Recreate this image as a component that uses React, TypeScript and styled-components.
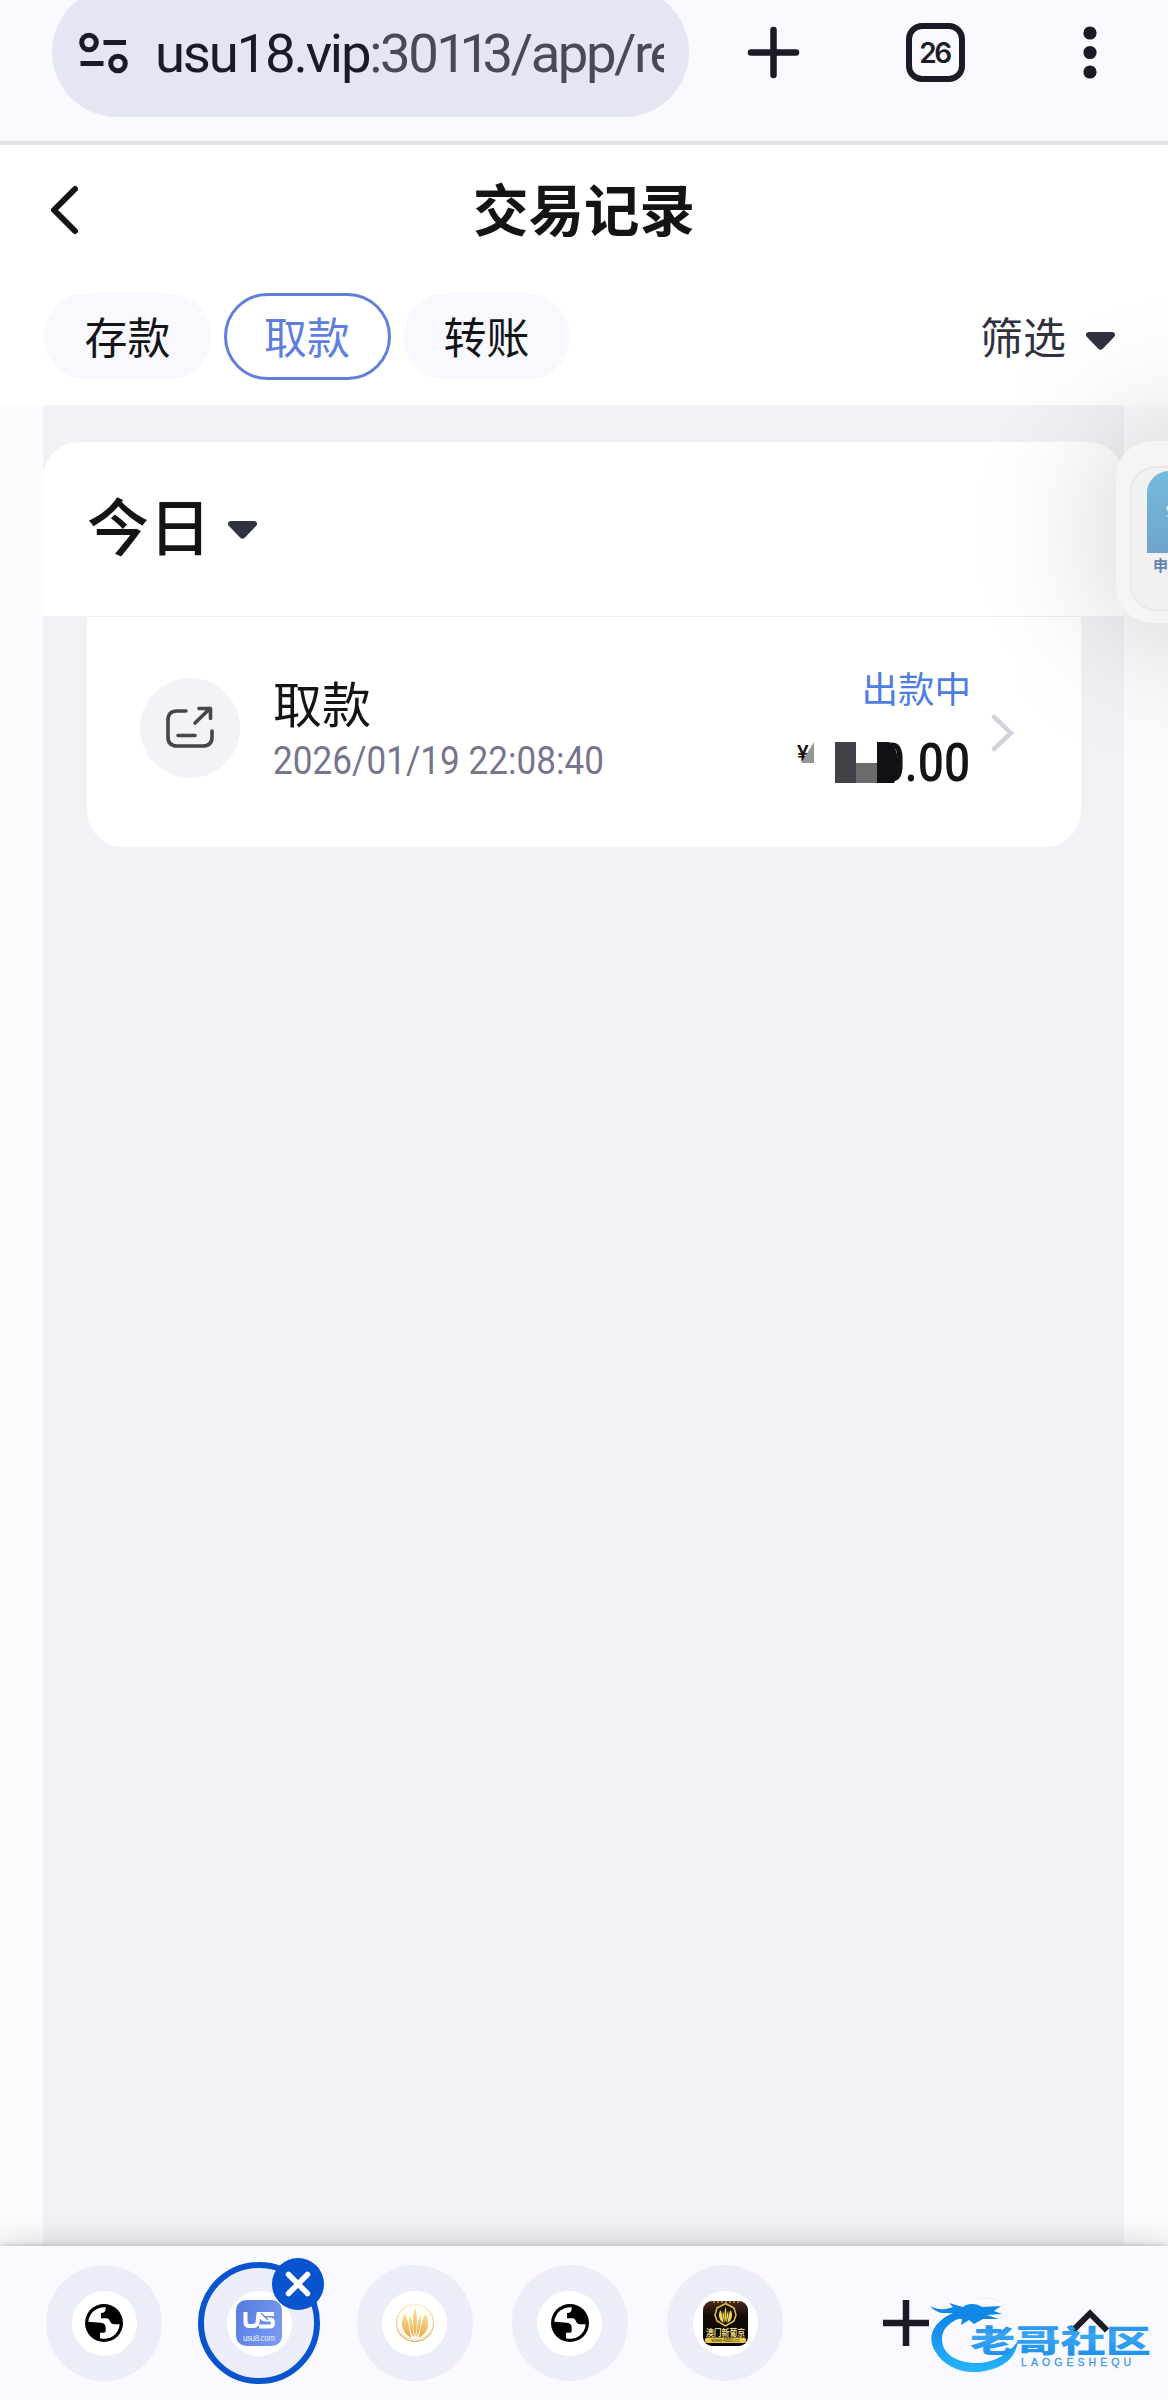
import React from "react";
import styled, { createGlobalStyle } from "styled-components";

const cjk = `"Noto Sans CJK SC", sans-serif`;

const Global = createGlobalStyle`
  * { box-sizing: border-box; }
  body { margin: 0; background: #fbfbfd; font-family: Roboto, ${cjk}; color: #141416; }
`;

const Screen = styled.div`
  position: relative;
  width: 1168px;
  height: 2400px;
  display: flex;
  flex-direction: column;
  overflow: hidden;
`;

/* Browser toolbar */
const Toolbar = styled.header`
  height: 145px;
  flex: none;
  display: flex;
  align-items: flex-start;
  padding-left: 52px;
  background: #f9f9ff;
  border-bottom: 4px solid #e2e2e8;
`;
const AddressPill = styled.div`
  width: 637px;
  height: 130px;
  margin-top: -13px;
  padding: 2px 25px 0 27px;
  border-radius: 65px;
  background: #e4e6f4;
  display: flex;
  align-items: center;
  gap: 27px;
`;
const Url = styled.div`
  width: 509px;
  overflow: hidden;
  white-space: nowrap;
  font: 400 54.5px/80px Roboto, sans-serif;
  color: #474a59;
`;
const Host = styled.span`
  color: #191b28;
  letter-spacing: -2.2px;
`;
const UrlPath = styled.span`
  letter-spacing: -2.5px;
`;
const NarrowDigits = styled.span`
  letter-spacing: -7.5px;
`;
const ToolbarIcons = styled.div`
  display: flex;
  align-items: center;
  height: 105px;
  padding-left: 58px;
  gap: 106px;
`;
const TabCount = styled.div`
  width: 59px;
  height: 59px;
  border: 6.5px solid #1a1b26;
  border-radius: 16px;
  display: flex;
  align-items: center;
  justify-content: center;
  font: 600 28px/28px Inter, sans-serif;
  letter-spacing: -2.4px;
  padding-right: 2px;
  color: #1a1b26;
`;

/* Page heading */
const Heading = styled.div`
  flex: none;
  height: 260px;
  background: #fff;
`;
const TitleRow = styled.div`
  height: 132px;
  display: grid;
  grid-template-columns: 200px 1fr 200px;
  align-items: center;
`;
const Back = styled.svg`
  margin: -2px 0 0 47px;
`;
const Title = styled.h1`
  margin: 0;
  padding-bottom: 9px;
  text-align: center;
  font: 700 55.5px/80px ${cjk};
`;
const FilterRow = styled.div`
  display: flex;
  align-items: center;
  padding: 16px 53px 0 44px;
`;
const Chips = styled.div`
  display: flex;
  gap: 12.5px;
  flex: 1;
`;
const Chip = styled.button<{ $active?: boolean }>`
  width: 167px;
  height: 87px;
  padding: 0 0 4px;
  border-radius: 44px;
  border: ${(p) => (p.$active ? "3px solid #5f7fda" : "3px solid #f8f9fe")};
  background: ${(p) => (p.$active ? "#fff" : "#f8f9fe")};
  color: ${(p) => (p.$active ? "#5f7fe0" : "#141416")};
  font: 400 43px/60px ${cjk};
`;
const Filter = styled.div`
  display: flex;
  align-items: center;
  gap: 20px;
  padding-bottom: 4px;
  color: #30323f;
  font: 400 43px/60px ${cjk};
`;
const Caret = styled.svg`
  margin-top: 13px;
`;

/* Records */
const Records = styled.main`
  flex: 1;
  margin: 0 44px 0 43px;
  padding-top: 37px;
  background: #f1f1f6;
`;
const DayHeader = styled.section`
  height: 174px;
  padding: 0 0 11px 44px;
  border-radius: 36px 36px 0 0;
  background: #fff;
  display: flex;
  align-items: center;
  gap: 17px;
  font: 500 62px/80px ${cjk};
`;
const RecordCard = styled.section`
  height: 231px;
  margin: 0 43px 0 44px;
  padding: 0 66px 8px 53px;
  border-top: 1px solid #ededf0;
  border-radius: 0 0 36px 36px;
  background: #fff;
  display: flex;
  align-items: center;
`;
const RecordIcon = styled.div`
  width: 100px;
  height: 100px;
  border-radius: 50%;
  background: #f2f2f7;
  display: flex;
  align-items: center;
  justify-content: center;
`;
const RecordInfo = styled.div`
  flex: 1;
  padding: 0 0 2px 33px;
`;
const RecordName = styled.div`
  font: 400 49px/64px ${cjk};
  padding-bottom: 3px;
`;
const RecordTime = styled.div`
  font: 400 38px/48px Roboto, sans-serif;
  color: #77758c;
  white-space: nowrap;
  transform: scaleX(0.924);
  transform-origin: left;
`;
const RecordSum = styled.div`
  width: 175px;
  display: flex;
  flex-direction: column;
  align-items: flex-end;
  gap: 18px;
`;
const Status = styled.div`
  margin: -2px -1px 0 0;
  font: 400 36.5px/54px ${cjk};
  color: #4c7ee4;
`;
const Amount = styled.div`
  position: relative;
  width: 175px;
  height: 60px;
  display: flex;
  justify-content: space-between;
  align-items: center;
`;
const Yen = styled.span`
  font: 500 22px/22px Roboto, sans-serif;
  margin: -18px 0 0 2px;
`;
const Digits = styled.span`
  font: 500 53px/60px Roboto, sans-serif;
  transform: scaleX(0.87);
  transform-origin: right;
`;
const Mosaic = styled.svg`
  position: absolute;
  left: 3px;
  top: 9px;
`;
const Chevron = styled.svg`
  margin: 10px 0 0 21px;
`;

/* Floating service widget */
const Widget = styled.aside`
  position: absolute;
  left: 1116px;
  top: 441px;
  width: 182px;
  height: 182px;
  padding: 25px 0 0 14px;
  border-radius: 36px;
  background: #f5f5f5;
  box-shadow: 0 0 150px rgba(0, 0, 0, 0.22);
`;
const WidgetInner = styled.div`
  width: 145px;
  height: 145px;
  padding: 3px 0 0 15px;
  border-radius: 26px;
  border: 2px solid #e8e8e9;
  background: #f1f1f2;
`;
const WidgetPicture = styled.div`
  width: 110px;
  height: 82px;
  border-radius: 22px 0 0 0;
  background: linear-gradient(#75bbdc, #70a3cb);
  display: flex;
`;
const WidgetLabel = styled.div`
  padding-left: 6px;
  font: 700 15px/24px ${cjk};
  color: #6282b2;
`;

/* Tab strip */
const TabStrip = styled.footer`
  position: relative;
  height: 154px;
  flex: none;
  display: flex;
  padding: 16px 0 0 43px;
  background: #f9f9ff;
  box-shadow: 0 -1px 5px rgba(0, 0, 0, 0.18), 0 -5px 28px rgba(0, 0, 0, 0.13);
`;
const TabList = styled.div`
  display: flex;
  gap: 33.3px;
`;
const Tab = styled.div<{ $active?: boolean }>`
  position: relative;
  width: 122px;
  height: 122px;
  border-radius: 50%;
  border: ${(p) => (p.$active ? "6.5px solid #0854cf" : "3px solid transparent")};
  background: #ebedf9;
  background-clip: padding-box;
  display: flex;
  align-items: center;
  justify-content: center;
`;
const Favicon = styled.div`
  width: 65px;
  height: 65px;
  border-radius: 50%;
  background: #fff;
  display: flex;
  align-items: center;
  justify-content: center;
`;
const CloseBadge = styled.div`
  position: absolute;
  right: -10px;
  top: -10px;
  width: 52px;
  height: 52px;
  border-radius: 50%;
  background: #0854cf;
  display: flex;
  align-items: center;
  justify-content: center;
`;
const StripActions = styled.div`
  display: flex;
  width: 226px;
  height: 122px;
  margin-left: 97px;
  justify-content: space-between;
  align-items: center;
`;
const ExpandIcon = styled.svg`
  margin-bottom: 4px;
`;
const Watermark = styled.svg`
  position: absolute;
  left: 926px;
  top: 50px;
`;

const CaretIcon = () => (
  <Caret width={29} height="18" viewBox="0 0 29 18">
    <path d="M3 0H26C29 0 30 3 28 5L17 16.500Q14.500 19 12 16.500L1 5C-1 3 0 0 3 0Z" fill="#30323f" />
  </Caret>
);

const Globe = () => (
  <svg width="38" height="38" viewBox="0 0 114 114">
    <circle cx="57" cy="57" r="57" fill="#000" />
    <path
      d="M10 53A47 47 0 0 1 62 10V14Q62 27 48 27V43H65Q72 43 75 52Q78 61 88 61H104A47 47 0 0 1 45 103V86H56Q62 86 62 80V71Q62 57 48 56Z"
      fill="#fff"
    />
  </svg>
);

const UsLogo = () => (
  <svg width="46" height="46" viewBox="0 0 46 46">
    <defs>
      <linearGradient id="us" x1="0" x2="1" y1="0" y2="0.4">
        <stop offset="0" stopColor="#557be0" />
        <stop offset="1" stopColor="#7797f0" />
      </linearGradient>
    </defs>
    <rect width="46" height="46" rx="10" fill="url(#us)" />
    <path d="M9.500 12V22Q9.500 26 13.500 26H17Q21 26 21.600 22L22.500 14H38" fill="none" stroke="#fff" strokeWidth="4" />
    <path d="M25 14Q25 19.500 30 19.500H34Q37 19.500 37 23T33.500 26.500H23" fill="none" stroke="#fff" strokeWidth="4" />
    <path d="M25 13L32 20" stroke="#6588e9" strokeWidth="1.200" />
    <text x="7" y="41" fontFamily="Inter, sans-serif" fontSize="7.500" fill="#eef3ff" textLength="32">usu8.com</text>
  </svg>
);

const lotusPetals = (
  <>
    <path d="M20 5C17.500 12 17.500 22 20 34C22.500 22 22.500 12 20 5Z" />
    <path d="M14.500 12C13.500 20 15 29 18.600 34.500C18.600 26 17.500 18 14.500 12Z" />
    <path d="M25.500 12C26.500 20 25 29 21.400 34.500C21.400 26 22.500 18 25.500 12Z" />
    <path d="M9.500 11C5 19 6 30 16.500 35C14 28 15 20 9.500 11Z" />
    <path d="M30.500 11C35 19 34 30 23.500 35C26 28 25 20 30.500 11Z" />
  </>
);

const LotusLogo = () => (
  <svg width="40" height="40" viewBox="0 0 40 40">
    <defs>
      <linearGradient id="lotus" x1="0" x2="0" y1="0" y2="1">
        <stop offset="0" stopColor="#f9dc93" />
        <stop offset="1" stopColor="#e9a94b" />
      </linearGradient>
      <linearGradient id="ring" x1="0" x2="0" y1="0" y2="1">
        <stop offset="0" stopColor="#fdf0cd" />
        <stop offset="1" stopColor="#e2b56d" />
      </linearGradient>
    </defs>
    <circle cx="20" cy="20" r="18.500" fill="#fffdf6" stroke="url(#ring)" strokeWidth="1.400" />
    <path d="M5 29Q20 44 35 29Q29 37 20 37T5 29" fill="#e0bd84" opacity=".6" />
    <g fill="url(#lotus)">{lotusPetals}</g>
  </svg>
);

const CasinoLogo = () => (
  <svg width="45" height="45" viewBox="0 0 45 45">
    <defs>
      <linearGradient id="night" x1="0" x2="0" y1="0" y2="1">
        <stop offset="0" stopColor="#49291d" />
        <stop offset=".35" stopColor="#120b06" />
        <stop offset="1" stopColor="#050302" />
      </linearGradient>
      <clipPath id="tile"><rect width="45" height="45" rx="9" /></clipPath>
    </defs>
    <g clipPath="url(#tile)">
      <rect width="45" height="45" fill="url(#night)" />
      <path d="M10 1H36" stroke="#a47733" strokeWidth="2" strokeDasharray="2 2" />
      <path d="M22.500 2.500L31 7L33 14L31 20L22.500 25L14 20L12 14L14 7Z" fill="#171006" stroke="#e0c54a" strokeWidth="1.500" />
      <g transform="translate(12.500 3) scale(.5 .54)" fill="#f0d85b">{lotusPetals}</g>
      <text x="3" y="35" fontFamily='"Noto Sans CJK SC", sans-serif' fontSize="9" fontWeight="700" fill="#f0dc82" textLength="39" lengthAdjust="spacingAndGlyphs">澳门新葡京</text>
      <rect x="2" y="36.500" width="41" height="5.500" rx="2" fill="#e4c74f" />
      <text x="8" y="41" fontFamily="Inter, sans-serif" fontSize="4.800" fill="#503c10" textLength="29">www.4886.cc</text>
    </g>
  </svg>
);

const Brand = () => (
  <Watermark width="232" height="84" viewBox="0 0 232 84">
    <defs>
      <linearGradient id="sea" x1="0" x2="0" y1="0" y2="1">
        <stop offset="0" stopColor="#0c7fe6" />
        <stop offset="1" stopColor="#26b5fa" />
      </linearGradient>
      <linearGradient id="ink" x1="0" x2="0" y1="0" y2="1">
        <stop offset="0" stopColor="#0f7fe0" />
        <stop offset=".45" stopColor="#39a5f4" />
        <stop offset="1" stopColor="#168ceb" />
      </linearGradient>
    </defs>
    <path
      d="M36 14C10 21-1 39 9 55C19 73 43 81 67 73C82 68 90 59 92 45C82 59 67 67 51 67C29 67 16 57 16 43C16 31 27 23 42 20Z"
      fill="url(#sea)"
    />
    <path
      d="M4 10C14 15 21 13 27 11L23 7L37 11C41 7 51 7 56 11L75 10L68 15L76 18L61 19L73 23L57 23L48 28L43 24L35 29L36 23L27 22L32 17L20 17Q11 18 4 10Z"
      fill="#1188e5"
    />
    <path d="M46 4Q67-2 78 9" fill="none" stroke="#e9f1fb" strokeWidth="1" />
    <text x="44" y="55.500" fontFamily='"Noto Sans CJK SC", sans-serif' fontSize="31" fontWeight="900" fill="url(#ink)" textLength="181" lengthAdjust="spacingAndGlyphs">老哥社区</text>
    <text x="95" y="70" fontFamily='"Liberation Sans", sans-serif' fontSize="10.500" fill="#3f9be6" stroke="#3f9be6" strokeWidth=".3" textLength="110">LAOGESHEQU</text>
  </Watermark>
);

export default function App() {
  return (
    <Screen>
      <Global />
      <Toolbar>
        <AddressPill>
          <svg width="49" height="42" viewBox="0 0 49 42" fill="none" stroke="#191b28" strokeWidth="5">
            <circle cx="10" cy="10.500" r="7.300" />
            <path d="M24.500 10.500H47M1.500 31.500H24.500" />
            <circle cx="39" cy="31.500" r="7.300" />
          </svg>
          <Url><Host>usu18.vip</Host><UrlPath>:30<NarrowDigits>11</NarrowDigits>3/app/re</UrlPath></Url>
        </AddressPill>
        <ToolbarIcons>
          <svg width="53" height="53" viewBox="0 0 53 53" stroke="#1a1b26" strokeWidth="6.500" strokeLinecap="round">
            <path d="M4 26.500H49M26.500 4V49" />
          </svg>
          <TabCount>26</TabCount>
          <svg width="40" height="53" viewBox="0 0 40 53" fill="#1a1b26">
            <circle cx="19" cy="7" r="6.600" /><circle cx="19" cy="26.500" r="6.600" /><circle cx="19" cy="46" r="6.600" />
          </svg>
        </ToolbarIcons>
      </Toolbar>

      <Heading>
        <TitleRow>
          <Back width="34" height="52" viewBox="0 0 34 52" fill="none" stroke="#141416" strokeWidth="6" strokeLinecap="round" strokeLinejoin="round">
            <path d="M28 5L7 26L28 47" />
          </Back>
          <Title>交易记录</Title>
        </TitleRow>
        <FilterRow>
          <Chips>
            <Chip>存款</Chip>
            <Chip $active>取款</Chip>
            <Chip>转账</Chip>
          </Chips>
          <Filter>筛选<CaretIcon /></Filter>
        </FilterRow>
      </Heading>

      <Records>
        <DayHeader>今日<CaretIcon /></DayHeader>
        <RecordCard>
          <RecordIcon>
            <svg width="50" height="46" viewBox="0 0 50 46" fill="none" stroke="#44464f" strokeWidth="3.600" strokeLinecap="round" strokeLinejoin="round">
              <path d="M21 6H12Q3 6 3 15V32Q3 41 12 41H38Q47 41 47 32V26" />
              <path d="M13 30.500H30M30 18L45 3.500M34 3.500H45.500V13.500" />
            </svg>
          </RecordIcon>
          <RecordInfo>
            <RecordName>取款</RecordName>
            <RecordTime>2026/01/19 22:08:40</RecordTime>
          </RecordInfo>
          <RecordSum>
            <Status>出款中</Status>
            <Amount>
              <Yen>¥</Yen>
              <Digits>0.00</Digits>
              <Mosaic width="106" height="44" viewBox="0 0 106 44">
                <path d="M16 0V21H3Z" fill="#969696" />
                <path d="M0 21V17L4 21Z" fill="#fff" />
                <path d="M37 0H58V41H37Z" fill="#424147" />
                <path d="M58 21H79V41H58Z" fill="#6b6b6b" />
                <path d="M79 0H91Q100 7 100 19Q100 33 96 41H79Z" fill="#101015" />
              </Mosaic>
            </Amount>
          </RecordSum>
          <Chevron width="24" height="38" viewBox="0 0 24 38" fill="none" stroke="#d2d2db" strokeWidth="4.500" strokeLinecap="round">
            <path d="M3 3L20 19L3 35" />
          </Chevron>
        </RecordCard>
      </Records>

      <TabStrip>
        <TabList>
          <Tab><Favicon><Globe /></Favicon></Tab>
          <Tab $active>
            <Favicon><UsLogo /></Favicon>
            <CloseBadge>
              <svg width="26" height="26" viewBox="0 0 26 26" stroke="#fff" strokeWidth="5.500" strokeLinecap="round">
                <path d="M3.500 3.500L22.500 22.500M22.500 3.500L3.500 22.500" />
              </svg>
            </CloseBadge>
          </Tab>
          <Tab><Favicon><LotusLogo /></Favicon></Tab>
          <Tab><Favicon><Globe /></Favicon></Tab>
          <Tab><Favicon><CasinoLogo /></Favicon></Tab>
        </TabList>
        <StripActions>
          <svg width="46" height="46" viewBox="0 0 46 46" stroke="#1a1b26" strokeWidth="6.500"><path d="M0 23H46M23 0V46" /></svg>
          <ExpandIcon width="38" height="24" viewBox="0 0 38 24" fill="none" stroke="#1a1b26" strokeWidth="6"><path d="M2 21.500L19 4.500L36 21.500" /></ExpandIcon>
        </StripActions>
        <Brand />
      </TabStrip>

      <Widget>
        <WidgetInner>
          <WidgetPicture>
            <svg width="40" height="60" viewBox="0 0 40 60" fill="#d3eaf5"><path d="M19 36L25 32V39L20 40ZM19 45L25 44V49Z" /></svg>
          </WidgetPicture>
          <WidgetLabel>申</WidgetLabel>
        </WidgetInner>
      </Widget>
    </Screen>
  );
}
